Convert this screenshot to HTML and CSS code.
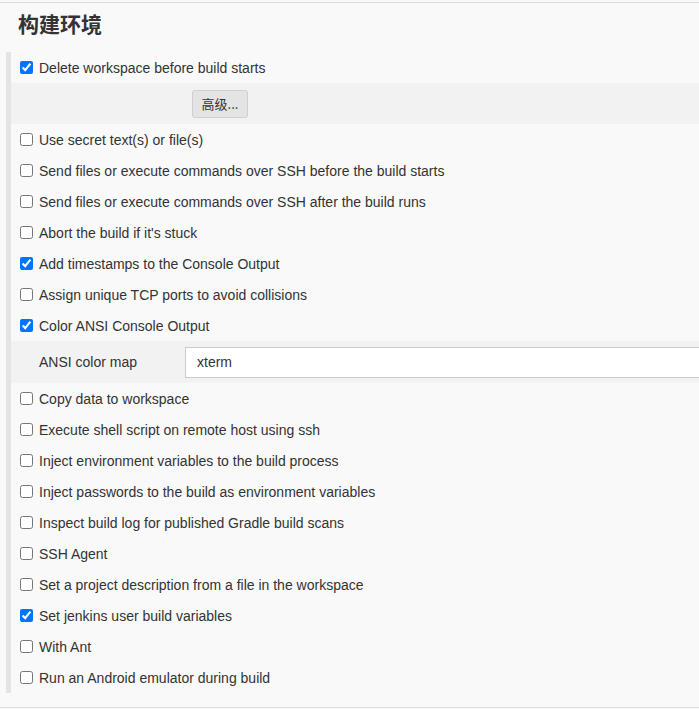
FILE: index.html
```html
<!DOCTYPE html>
<html>
<head>
<meta charset="utf-8">
<link rel="stylesheet" href="styles.css">
</head>
<body>
<div class="page">
  <div class="top-line"></div>
  <h2 class="title">构建环境</h2>
  <div class="section">
    <div class="bar">
      <label class="row"><input type="checkbox" checked><span>Delete workspace before build starts</span></label>
      <div class="adv-row"><button class="adv-btn">高级...</button></div>
      <label class="row"><input type="checkbox"><span>Use secret text(s) or file(s)</span></label>
      <label class="row"><input type="checkbox"><span>Send files or execute commands over SSH before the build starts</span></label>
      <label class="row"><input type="checkbox"><span>Send files or execute commands over SSH after the build runs</span></label>
      <label class="row"><input type="checkbox"><span>Abort the build if it's stuck</span></label>
      <label class="row"><input type="checkbox" checked><span>Add timestamps to the Console Output</span></label>
      <label class="row"><input type="checkbox"><span>Assign unique TCP ports to avoid collisions</span></label>
      <label class="row"><input type="checkbox" checked><span>Color ANSI Console Output</span></label>
      <div class="ansi-row"><span class="ansi-label">ANSI color map</span><input class="ansi-input" type="text" value="xterm"></div>
      <label class="row"><input type="checkbox"><span>Copy data to workspace</span></label>
      <label class="row"><input type="checkbox"><span>Execute shell script on remote host using ssh</span></label>
      <label class="row"><input type="checkbox"><span>Inject environment variables to the build process</span></label>
      <label class="row"><input type="checkbox"><span>Inject passwords to the build as environment variables</span></label>
      <label class="row"><input type="checkbox"><span>Inspect build log for published Gradle build scans</span></label>
      <label class="row"><input type="checkbox"><span>SSH Agent</span></label>
      <label class="row"><input type="checkbox"><span>Set a project description from a file in the workspace</span></label>
      <label class="row"><input type="checkbox" checked><span>Set jenkins user build variables</span></label>
      <label class="row"><input type="checkbox"><span>With Ant</span></label>
      <label class="row"><input type="checkbox"><span>Run an Android emulator during build</span></label>
    </div>
  </div>
  <div class="bottom-line"></div>
</div>
</body>
</html>
```
FILE: styles.css
```css
html, body {
  margin: 0;
  padding: 0;
  background: #f9f9f9;
}
body {
  font-family: "Liberation Sans", Arial, "Noto Sans CJK SC", sans-serif;
  font-size: 14px;
  color: #333;
  overflow: hidden;
}
.page {
  width: 699px;
  height: 709px;
  overflow: hidden;
}
.top-line {
  margin-top: 2px;
  height: 1px;
  background: #dcdcdc;
}
.title {
  margin: 6px 0 0 18px;
  font-family: "Noto Sans CJK SC", sans-serif;
  font-size: 21px;
  line-height: 28px;
  font-weight: bold;
  color: #333;
  height: 43px;
}
.section {
  padding-left: 6px;
}
.bar {
  border-left: 5px solid #e4e4e4;
}
.row {
  display: flex;
  align-items: center;
  height: 31px;
  padding-left: 9px;
}
.row input {
  margin: 0 6px 0 0;
  width: 13px;
  height: 13px;
}
.adv-row {
  height: 41px;
  background: #f2f2f2;
  display: flex;
  align-items: center;
  padding-left: 181px;
}
.adv-btn {
  height: 28px;
  width: 56px;
  padding: 0;
  background: #e4e4e4;
  border: 1px solid #cfcfcf;
  border-radius: 3px;
  font-family: "Noto Sans CJK SC", sans-serif;
  font-size: 13px;
  color: #333;
}
.ansi-row {
  height: 42px;
  background: #f2f2f2;
  display: flex;
  align-items: center;
  padding-left: 28px;
}
.ansi-label {
  width: 146px;
}
.ansi-input {
  flex: 1;
  margin-right: -20px;
  height: 31px;
  box-sizing: border-box;
  border: 1px solid #ccc;
  background: #fff;
  padding: 0 11px;
  font-family: "Liberation Sans", Arial, sans-serif;
  font-size: 14px;
  color: #333;
  outline: none;
}
.bottom-line {
  margin-top: 14px;
  height: 1px;
  background: #dcdcdc;
}
```
